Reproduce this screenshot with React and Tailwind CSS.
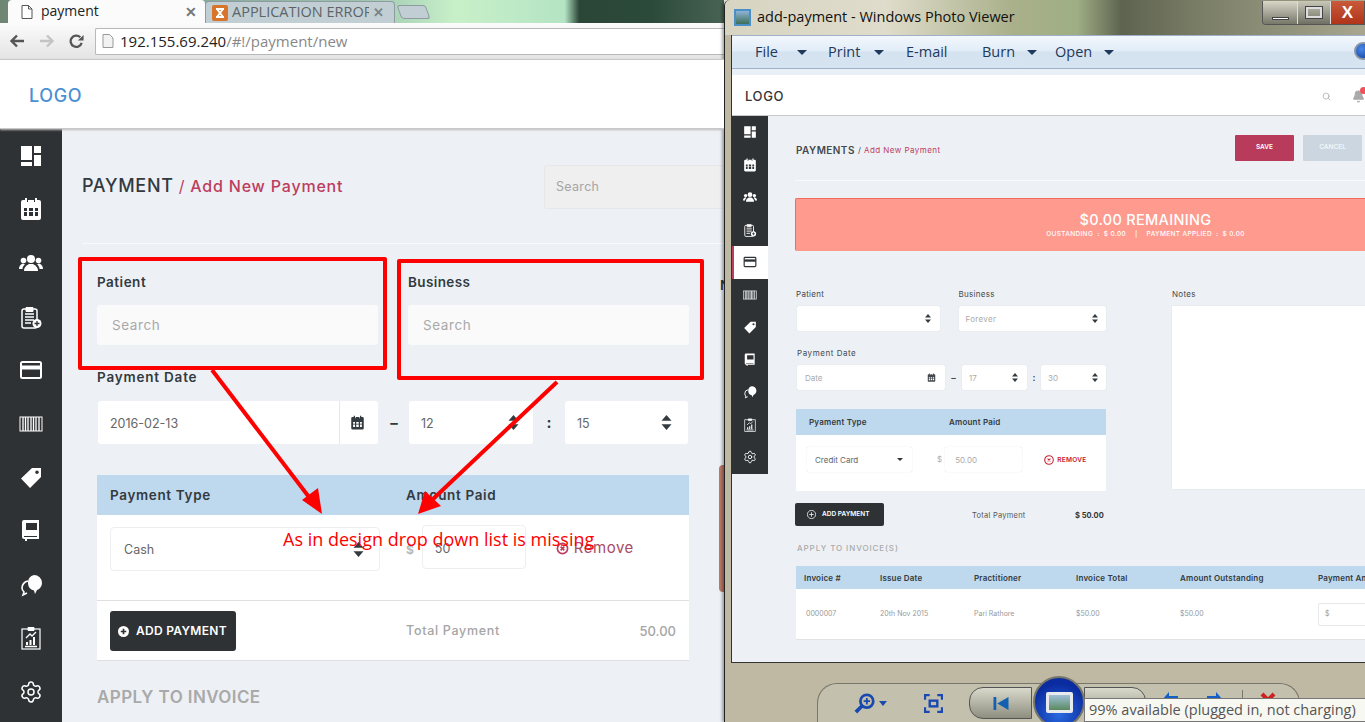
import { Settings, Search, Bell } from 'lucide-react';

const sans = "font-['Inter','Noto_Sans',sans-serif]";

// sidebar icons, all drawn on a 24 box so both sidebars can share them
const DashIcon = ({ className }) => (
  <svg viewBox="0 0 24 24" className={className} fill="currentColor">
    <path d="M2 2h11v14H2zM15 2h7v7h-7zM2 18h11v4H2zM15 11h7v11h-7z" />
  </svg>
);
const CalendarIcon = ({ className }) => (
  <svg viewBox="0 0 24 24" className={className} fill="currentColor">
    <path fillRule="evenodd" d="M4 3h2V1h2v4h1V3h6V1h0v4h1V1h2v2h2a2 2 0 0 1 2 2v16a2 2 0 0 1-2 2H4a2 2 0 0 1-2-2V5a2 2 0 0 1 2-2zM5 11v3h3v-3zM10 11v3h4v-3zM16 11v3h3v-3zM5 15v4h3v-4zM10 15v4h4v-4zM16 15v4h3v-4z" />
  </svg>
);
const UsersIcon = ({ className }) => (
  <svg viewBox="0 0 24 24" className={className} fill="currentColor">
    <circle cx="12" cy="8" r="4" />
    <path d="M5 20c0-4 3-6 5-7h4c2 1 5 3 5 7z" />
    <circle cx="4.5" cy="9.5" r="2.8" />
    <circle cx="19.5" cy="9.5" r="2.8" />
    <path d="M0 18c0-3 1.500-4.500 4-5.500l2 1c-1.500 1-2.500 2.500-2.500 4.500zM24 18c0-3-1.500-4.500-4-5.500l-2 1c1.500 1 2.500 2.500 2.500 4.500z" />
  </svg>
);
const ClipboardIcon = ({ className }) => (
  <svg viewBox="0 0 24 24" className={className} fill="none" stroke="currentColor">
    <rect x="3" y="4" width="15" height="19" rx="2" strokeWidth="1.500" />
    <path d="M7 2.500h7v4H7z" fill="currentColor" />
    <path d="M6 9h9M6 12h9M6 15h9M6 18h6" strokeWidth="1.300" />
    <circle cx="18" cy="18.500" r="4.500" fill="currentColor" stroke="none" />
    <path d="M18 16v5M15.500 18.500h5" stroke="#2f3235" strokeWidth="1.300" />
  </svg>
);
const CardIcon = ({ className }) => (
  <svg viewBox="0 0 24 24" className={className} fill="none" stroke="currentColor">
    <rect x="2" y="4" width="20" height="16" rx="1.500" strokeWidth="2" />
    <path d="M2 9.500h20" strokeWidth="4" />
  </svg>
);
const BarcodeIcon = ({ className }) => (
  <svg viewBox="0 0 24 24" className={className} fill="none" stroke="currentColor">
    <rect x="1" y="5" width="22" height="14" strokeWidth="1" />
    <path d="M4 5v14M6.500 5v14M9 5v14M12 5v14M14.500 5v14M17 5v14M20 5v14" strokeWidth="1.300" />
  </svg>
);
const TagIcon = ({ className }) => (
  <svg viewBox="0 0 24 24" className={className} fill="currentColor">
    <path fillRule="evenodd" d="M13 3h9v9L11 23 2 13.500zM18 5.500a1.800 1.800 0 1 0 0 3.600 1.800 1.800 0 0 0 0-3.600z" />
  </svg>
);
const BookIcon = ({ className }) => (
  <svg viewBox="0 0 24 24" className={className} fill="currentColor">
    <path fillRule="evenodd" d="M5 1h15v19H8v2H6v-2H5a2 2 0 0 1-2-2V3a2 2 0 0 1 2-2zM7 4v7h11V4zM5 17v1h13v-1z" />
  </svg>
);
const ChatIcon = ({ className }) => (
  <svg viewBox="0 0 24 24" className={className}>
    <path d="M9 8a7 7 0 0 0-6 7c0 2 1 3 2 4l-1 3 4-2" fill="none" stroke="currentColor" strokeWidth="1.600" />
    <path d="M15 2a8 8 0 0 1 8 8c0 3-2 6-5 7l-2 4-1-3.500A8 8 0 0 1 15 2z" fill="currentColor" />
  </svg>
);
const ReportIcon = ({ className }) => (
  <svg viewBox="0 0 24 24" className={className} fill="none" stroke="currentColor">
    <rect x="3" y="3" width="18" height="20" strokeWidth="1.200" />
    <path d="M9 1.500h6v3H9z" fill="currentColor" />
    <path d="M7 12l4-4 2 2 4-4" strokeWidth="1.300" />
    <path d="M8 19v-3M11.500 19v-5M15 19v-8" strokeWidth="2" />
    <path d="M6 20.500h12" strokeWidth="1.500" />
  </svg>
);
const GearIcon = ({ className }) => <Settings className={className} strokeWidth={1.5} />;

const navIcons = [DashIcon, CalendarIcon, UsersIcon, ClipboardIcon, CardIcon, BarcodeIcon, TagIcon, BookIcon, ChatIcon, ReportIcon, GearIcon];

const Updown = ({ className }) => (
  <svg viewBox="0 0 12 18" className={className} fill="currentColor">
    <path d="M6 0l6 7H0zM6 18l-6-7h12z" />
  </svg>
);

const RedBox = ({ className }) => (
  <div className={`absolute rounded-[2px] border-4 border-[#fe0000] ${className}`} />
);

function ChromeBar() {
  return (
    <div className="shrink-0">
      <div className="flex h-[23px] items-end bg-[linear-gradient(90deg,#6f8673_0%,#87a99a_28%,#9cc5b0_50%,#c8f0c8_63%,#b4e4c4_78%,#2a4637_80%,#2c4a3a_90%,#486354_100%)]">
        <div className="ml-[8px] flex h-[23px] w-[197px] items-center gap-[8px] rounded-t-[4px] bg-[#fbfbfb] pl-[13px] pr-[8px]">
          <svg viewBox="0 0 12 14" className="h-[14px] w-[12px] shrink-0" fill="#fff" stroke="#555">
            <path d="M1 .5h6.500L11 4v9.500H1z" />
            <path d="M7.500.5V4H11" fill="none" />
          </svg>
          <span className="flex-1 pb-[1px] font-['Open_Sans',sans-serif] text-[14px] leading-none text-[#222]">payment</span>
          <span className="font-['Liberation_Sans',sans-serif] text-[14px] font-bold leading-none text-[#777]">✕</span>
        </div>
        <div className="flex h-[22px] w-[190px] items-center gap-[4px] rounded-t-[4px] border border-b-0 border-[#8f9ba0] bg-[#c1cfd4] pl-[6px] pr-[10px]">
          <svg viewBox="0 0 16 16" className="h-[16px] w-[16px] shrink-0">
            <rect width="16" height="16" rx="2" fill="#d9752b" />
            <path d="M4 4h8M4 12h8M5 4l6 8M11 4l-6 8" stroke="#fff" strokeWidth="2" fill="none" />
          </svg>
          <span className="flex-1 overflow-hidden whitespace-nowrap font-['Open_Sans',sans-serif] text-[14.500px] leading-none text-[#5c6468]">APPLICATION ERROR</span>
          <span className="font-['Liberation_Sans',sans-serif] text-[13px] font-bold leading-none text-[#7b8488]">✕</span>
        </div>
        <div className="mb-[4px] ml-[4px] h-[14px] w-[29px] skew-x-[20deg] rounded-[3px] border border-[#8f9ba0] bg-[#c1cfd4]" />
      </div>
      <div className="flex h-[36px] items-center bg-[linear-gradient(#fbfbfb,#e4e4e4)] pl-[9px]">
        <div className="flex w-[86px] items-center gap-[14px]">
          <svg viewBox="0 0 16 14" className="h-[14px] w-[16px]" fill="none" stroke="#555" strokeWidth="2.400">
            <path d="M15 7H3M8 1.500L2.500 7 8 12.500" />
          </svg>
          <svg viewBox="0 0 16 14" className="h-[14px] w-[16px]" fill="none" stroke="#c4c4c4" strokeWidth="2.400">
            <path d="M1 7h12M8 1.500L13.500 7 8 12.500" />
          </svg>
          <svg viewBox="0 0 16 16" className="h-[15px] w-[15px]" fill="none" stroke="#555" strokeWidth="2.400">
            <path d="M13.500 9.500A6 6 0 1 1 12 3.500" />
            <path d="M15.500 1v6h-6z" fill="#555" stroke="none" />
          </svg>
        </div>
        <div className="flex h-[27px] flex-1 items-center gap-[6px] rounded-l-[2px] border border-r-0 border-[#b9b9b9] bg-white pl-[6px]">
          <svg viewBox="0 0 12 14" className="h-[14px] w-[12px]" fill="#f2f2f2" stroke="#999">
            <path d="M1 .5h6.500L11 4v9.500H1z" />
          </svg>
          <span className="font-['Open_Sans',sans-serif] text-[15px] leading-none text-[#222]">
            192.155.69.240<span className="text-[#888]">/#!/payment/new</span>
          </span>
        </div>
      </div>
    </div>
  );
}

function LeftPage() {
  return (
    <div className={`flex h-[722px] w-[724px] shrink-0 flex-col overflow-hidden ${sans}`}>
      <ChromeBar />
      <div className="z-10 flex h-[70px] shrink-0 items-center border-y border-[#c8c8c8] bg-white pl-[29px] pt-[3px] shadow-[0_1px_2px_#bbb]">
        <span className="text-[18px] font-medium leading-none tracking-[0.6px] text-[#4a90d2]">LOGO</span>
      </div>
      <div className="flex flex-1">
        <div className="flex w-[62px] shrink-0 flex-col bg-[#2f3235]">
          {navIcons.map((Icon, i) => (
            <div key={i} className="flex h-[53.600px] items-center justify-center text-white">
              <Icon className="h-[24px] w-[24px]" />
            </div>
          ))}
        </div>
        <div className="relative flex-1 overflow-hidden bg-[#edf1f5]">
          <div className="ml-[20px] flex h-[115px] items-center justify-between border-b border-[#f9fafb]">
            <div className="flex items-baseline gap-[5px] whitespace-nowrap">
              <span className="text-[18px] font-medium leading-none tracking-[0.7px] text-[#333a40]">PAYMENT</span>
              <span className="text-[16px] font-medium leading-none tracking-[0.8px] text-[#bd3d5e]">
                <span className="font-normal">/</span> Add New Payment
              </span>
            </div>
            <div className="mt-[1px] flex h-[44px] w-[180px] items-center rounded-l-[3px] border border-r-0 border-[#e6e7e8] bg-[#efefef] pl-[11px] pt-[2px] text-[12.500px] tracking-[0.3px] text-[#a5a5a5]">
              Search
            </div>
          </div>

          <div className="mx-[35px]">
            <div className="mt-[29px] grid grid-cols-[281px_281px] gap-x-[30px]">
              <div>
                <div className="text-[13.500px] font-semibold leading-[18px] tracking-[0.5px] text-[#333a40]">Patient</div>
                <div className="mt-[14px] flex h-[40px] items-center rounded-[3px] bg-[#fafafa] pl-[15px] text-[13.500px] tracking-[0.6px] text-[#a9a9a9]">Search</div>
              </div>
              <div>
                <div className="text-[13.500px] font-semibold leading-[18px] tracking-[0.4px] text-[#333a40]">Business</div>
                <div className="mt-[14px] flex h-[40px] items-center rounded-[3px] bg-[#fafafa] pl-[15px] text-[13.500px] tracking-[0.6px] text-[#a9a9a9]">Search</div>
              </div>
            </div>

            <div className="mt-[23px] text-[13.500px] font-semibold leading-[18px] tracking-[0.8px] text-[#333a40]">Payment Date</div>
            <div className="mt-[15px] flex items-center">
              <div className="ml-[1px] flex h-[43px] w-[280px] items-center rounded-[3px] bg-white">
                <span className="flex-1 pl-[12px] pt-[3px] text-[12.500px] text-[#666]">2016-02-13</span>
                <span className="flex h-full w-[39px] items-center justify-center border-l border-[#e8e8e8] pr-[3px]">
                  <CalendarIcon className="h-[15px] w-[15px] text-[#333a40]" />
                </span>
              </div>
              <span className="flex w-[31px] justify-center pl-[1px] text-[15px] font-bold leading-none text-[#333a40]">–</span>
              <div className="flex h-[43px] w-[124px] items-center justify-between rounded-[3px] bg-white pl-[12px] pr-[14px] text-[12.500px] text-[#666]">
                <span className="pt-[3px]">12</span> <Updown className="h-[15px] w-[11px] text-[#333a40]" />
              </div>
              <span className="flex w-[32px] justify-center text-[15px] font-bold leading-none text-[#333a40]">:</span>
              <div className="flex h-[43px] w-[123px] items-center justify-between rounded-[3px] bg-white pl-[12px] pr-[16px] text-[12.500px] text-[#666]">
                <span className="pt-[3px]">15</span> <Updown className="h-[15px] w-[11px] text-[#333a40]" />
              </div>
            </div>

            <div className="mt-[31px] w-[592px]">
              <div className="flex h-[40px] items-center bg-[#bed8ee] pl-[13px] text-[13.500px] font-semibold tracking-[0.65px] text-[#333a40]">
                <span className="w-[296px]">Payment Type</span>
                <span>Amount Paid</span>
              </div>
              <div className="flex h-[86px] items-start border-b border-[#dfdfdf] bg-white pl-[13px] pt-[10px]">
                <div className="mt-[2px] flex h-[44px] w-[270px] items-center justify-between rounded-[4px] border border-[#eeeeee] pl-[13px] pr-[15px] text-[12.500px] text-[#666]">
                  <span className="pt-[3px]">Cash</span> <Updown className="h-[15px] w-[11px] text-[#333a40]" />
                </div>
                <span className="ml-[26px] mt-[16px] text-[12px] font-bold text-[#b9b9b9]">$</span>
                <div className="ml-[8px] flex h-[44px] w-[104px] items-center rounded-[4px] border border-[#eeeeee] pl-[12px] pt-[4px] text-[12.500px] text-[#666]">50</div>
                <div className="ml-[30px] mt-[12px] flex items-center gap-[5px] text-[15px] tracking-[0.5px] text-[#a94a66]">
                  <svg viewBox="0 0 14 14" className="h-[13px] w-[13px]" fill="none" stroke="#bd3d5e" strokeWidth="1.800">
                    <circle cx="7" cy="7" r="5.500" />
                    <path d="M5 5l4 4M9 5l-4 4" />
                  </svg>
                  Remove
                </div>
              </div>
              <div className="flex h-[60px] items-center border-b border-[#dfdfdf] bg-white pl-[13px] pr-[13px]">
                <div className="flex h-[40px] w-[126px] items-center gap-[7px] rounded-[3px] bg-[#2f3235] pl-[8px] pt-[1px] text-[12px] font-semibold tracking-[0.3px] text-white">
                  <svg viewBox="0 0 12 12" className="h-[11px] w-[11px]">
                    <circle cx="6" cy="6" r="6" fill="#fff" />
                    <path d="M6 3v6M3 6h6" stroke="#2f3235" strokeWidth="1.800" />
                  </svg>
                  ADD PAYMENT
                </div>
                <span className="ml-[170px] pt-[2px] text-[12.500px] font-medium tracking-[0.7px] text-[#a5a5a5]">Total Payment</span>
                <span className="ml-auto pt-[2px] text-[13px] font-medium text-[#a5a5a5]">50.00</span>
              </div>
            </div>

            <div className="mt-[28px] text-[17px] font-semibold leading-none tracking-[0.4px] text-[#a9a9a9]">APPLY TO INVOICE</div>
          </div>

          <div className="absolute right-0 top-[336px] h-[127px] w-[5px] rounded-l-[4px] bg-[#bb7a66]" />
          <span className="absolute left-[658px] top-[146px] text-[13.500px] font-semibold text-[#333a40]">N</span>
        </div>
      </div>
    </div>
  );
}

const miniInput = 'flex h-[25px] items-center justify-between rounded-[2px] bg-white text-[8px] shadow-[0_0_1px_#ccc]';

function PhotoViewer() {
  const columns = ['Invoice #', 'Issue Date', 'Practitioner', 'Invoice Total', 'Amount Outstanding', 'Payment Amount'];
  const widths = ['w-[76px]', 'w-[94px]', 'w-[102px]', 'w-[104px]', 'w-[138px]', 'w-[60px]'];
  const cells = ['0000007', '20th Nov 2015', 'Pari Rathore', '$50.00', '$50.00'];

  return (
    <div className="relative flex h-[722px] w-[641px] shrink-0 flex-col overflow-hidden rounded-tl-[6px] border-l border-[#222] bg-[#bfb8a2] shadow-[-2px_0_3px_#0005]">
      {/* title bar */}
      <div className="flex h-[35px] shrink-0 items-center gap-[6px] bg-[linear-gradient(90deg,#d8d4c2_0%,#e0dccb_25%,#a9b08a_45%,#9fae84_55%,#5e6350_62%,#7c7f68_75%,#a8a68f_100%)] pl-[9px]">
        <span className="flex h-[17px] w-[17px] items-center justify-center border-2 border-[#4a8fc7] bg-[linear-gradient(#8fb4d6,#3d6f5a)]" />
        <span className="font-['Open_Sans',sans-serif] text-[14.500px] leading-none text-[#111]">add-payment - Windows Photo Viewer</span>
        <div className="absolute right-0 top-[1px] flex h-[24px] w-[103px] overflow-hidden rounded-bl-[4px] border border-t-0 border-[#555]">
          <div className="flex w-[35px] items-end justify-center border-r border-[#ddd] bg-[linear-gradient(#d9d7c8,#77776a)] pb-[4px]">
            <span className="h-[3px] w-[17px] border border-[#444] bg-white" />
          </div>
          <div className="flex w-[33px] items-center justify-center border-r border-[#ddd] bg-[linear-gradient(#c8c7b8,#6f7064)]">
            <span className="h-[11px] w-[16px] border-2 border-[#ddd] outline-1 outline-[#444]" />
          </div>
          <div className="flex flex-1 items-center justify-center bg-[linear-gradient(#c95a3a,#b0341a)] font-['Liberation_Sans',sans-serif] text-[17px] font-bold leading-none text-white">X</div>
        </div>
      </div>

      <div className="ml-[6px] flex flex-1 flex-col border-b border-l border-[#333]">
        {/* menu */}
        <div className="relative flex h-[34px] shrink-0 items-center border-y border-[#9fb1ca] bg-[linear-gradient(#f2f7fc_0%,#e2edf8_45%,#d5e3f1_50%,#d6e3f1_100%)] pl-[23px] pt-[1px] font-['Open_Sans',sans-serif] text-[14.500px] leading-none text-[#1e395b]">
          <span className="w-[24px]">File</span>
          <span className="ml-[18px] h-0 w-0 border-x-[5px] border-t-[5px] border-x-transparent border-t-[#1e395b]" />
          <span className="ml-[21px] w-[32px]">Print</span>
          <span className="ml-[14px] h-0 w-0 border-x-[5px] border-t-[5px] border-x-transparent border-t-[#1e395b]" />
          <span className="ml-[22px] w-[44px]">E-mail</span>
          <span className="ml-[32px] w-[32px]">Burn</span>
          <span className="ml-[13px] h-0 w-0 border-x-[5px] border-t-[5px] border-x-transparent border-t-[#1e395b]" />
          <span className="ml-[18px] w-[36px]">Open</span>
          <span className="ml-[13px] h-0 w-0 border-x-[5px] border-t-[5px] border-x-transparent border-t-[#1e395b]" />
          <span className="absolute -right-[7px] top-[6px] h-[18px] w-[18px] rounded-full border-2 border-[#8a96a6] bg-[radial-gradient(circle_at_40%_35%,#4a8ae8,#123c9c)]" />
        </div>
        <div className="h-[6px] shrink-0 bg-[#e9eff7]" />

        {/* app header */}
        <div className={`flex h-[41px] shrink-0 items-center border-b border-[#c9c9c9] bg-white pl-[13px] pt-[2px] ${sans}`}>
          <span className="w-[41px] text-[13px] font-medium leading-none tracking-[0.6px] text-[#333]">LOGO</span>
          <Search className="ml-[538px] h-[11px] w-[11px] text-[#aaa]" strokeWidth={2} />
          <div className="relative ml-[21px]">
            <Bell className="h-[13px] w-[13px] text-[#aaa]" fill="#aaa" />
            <span className="absolute -right-[2px] -top-[3px] h-[7px] w-[7px] rounded-full bg-[#f0525a]" />
          </div>
        </div>

        <div className={`flex flex-1 bg-[#edf1f5] ${sans}`}>
          <div className="w-[36px] shrink-0">
            <div className="flex flex-col bg-[#2f3235]">
              {navIcons.map((Icon, i) => (
                <div
                  key={i}
                  className={`flex h-[32.500px] items-center justify-center ${i === 4 ? 'bg-white text-[#2f3235] shadow-[inset_2px_0_0_#bd3d5e]' : 'text-white'}`}
                >
                  <Icon className="h-[14px] w-[14px]" />
                </div>
              ))}
            </div>
          </div>

          <div className="flex-1 overflow-hidden pl-[27px]">
            <div className="flex h-[65px] items-center border-b border-[#f7f9fb] pr-[3px]">
              <span className="ml-[1px] mt-[3px] whitespace-nowrap text-[10px] font-semibold leading-none tracking-[0.45px] text-[#44494e]">PAYMENTS</span>
              <span className="ml-[3px] mt-[3px] whitespace-nowrap text-[8px] leading-none tracking-[0.45px] text-[#bd3d5e]"><span className="text-[#44494e]">/</span> Add New Payment</span>
              <span className="ml-auto flex h-[26px] w-[59px] shrink-0 items-center justify-center rounded-[1px] bg-[#b93b5b] text-[6.500px] font-semibold text-white">SAVE</span>
              <span className="ml-[9px] flex h-[26px] w-[59px] shrink-0 items-center justify-center rounded-[1px] bg-[#cbd6e0] text-[6.500px] font-semibold text-[#f2f5f8]">CANCEL</span>
            </div>

            <div className="mt-[17px] flex h-[53px] w-[700px] flex-col items-center justify-center rounded-l-[2px] border-l border-t border-[#f26b60] bg-[#fe9a8e] text-white">
              <div className="text-[14.500px] font-medium leading-[16px] tracking-[0.3px]">$0.00 REMAINING</div>
              <div className="mt-[1px] flex gap-[9px] whitespace-pre text-[6.500px] font-medium leading-[10px] tracking-[0.35px]">
                <span>OUSTANDING  :  $ 0.00</span>
                <span>|</span>
                <span>PAYMENT APPLIED  :  $ 0.00</span>
              </div>
            </div>

            <div className="mt-[37px] flex">
              <div className="w-[311px] shrink-0">
                <div className="flex gap-[19px] pl-[1px] text-[8px] leading-[12px] tracking-[0.3px] text-[#44494e]">
                  <div className="w-[144px]">
                    Patient
                    <div className={`${miniInput} ml-[1px] mt-[6px] pr-[9px]`}>
                      <span />
                      <Updown className="h-[9px] w-[6px] text-[#333a40]" />
                    </div>
                  </div>
                  <div className="w-[148px]">
                    Business
                    <div className={`${miniInput} mt-[6px] pl-[7px] pr-[8px] text-[#aaa]`}>
                      Forever <Updown className="h-[9px] w-[6px] text-[#333a40]" />
                    </div>
                  </div>
                </div>
                <div className="mt-[16px] pl-[2px] text-[8px] leading-[12px] tracking-[0.55px] text-[#44494e]">Payment Date</div>
                <div className="mt-[6px] flex items-center pl-[2px]">
                  <div className={`${miniInput} w-[148px] pl-[8px] pr-[9px] text-[#aaa]`}>
                    Date <CalendarIcon className="h-[9px] w-[9px] text-[#44494e]" />
                  </div>
                  <span className="flex w-[17px] justify-center text-[9px] font-bold leading-none text-[#44494e]">–</span>
                  <div className={`${miniInput} w-[65px] pl-[7px] pr-[9px] text-[#aaa]`}>
                    17 <Updown className="h-[9px] w-[6px] text-[#333a40]" />
                  </div>
                  <span className="flex w-[14px] justify-center text-[9px] font-bold leading-none text-[#44494e]">:</span>
                  <div className={`${miniInput} w-[65px] pl-[7px] pr-[8px] text-[#aaa]`}>
                    30 <Updown className="h-[9px] w-[6px] text-[#333a40]" />
                  </div>
                </div>
                <div className="ml-[1px] mt-[19px] w-[310px]">
                  <div className="flex h-[26px] items-center bg-[#bed8ee] pl-[13px] text-[8px] font-semibold tracking-[0.2px] text-[#333a40]">
                    <span className="w-[140px]">Pyament Type</span>
                    <span>Amount Paid</span>
                  </div>
                  <div className="flex h-[56px] items-start bg-white pl-[11px] pt-[12px]">
                    <div className={`${miniInput} w-[105px] pl-[8px] pr-[9px] text-[#666]`}>
                      Credit Card
                      <span className="h-0 w-0 border-x-[3.500px] border-t-[3.500px] border-x-transparent border-t-[#333]" />
                    </div>
                    <span className="ml-[25px] mt-[6px] text-[8px] leading-[12px] text-[#aaa]">$</span>
                    <div className={`${miniInput} ml-[3px] w-[77px] pl-[10px] text-[#aaa]`}>50.00</div>
                    <svg viewBox="0 0 14 14" className="ml-[22px] mt-[8px] h-[10px] w-[10px]" fill="none" stroke="#c8202f" strokeWidth="1.500">
                      <circle cx="7" cy="7" r="6" />
                      <path d="M5 5l4 4M9 5l-4 4" />
                    </svg>
                    <span className="ml-[3px] mt-[8px] text-[6.500px] font-semibold leading-[10px] tracking-[0.3px] text-[#c8202f]">REMOVE</span>
                  </div>
                </div>
              </div>
              <div className="ml-[66px] w-[250px] shrink-0 text-[8px] leading-[12px] tracking-[0.3px] text-[#44494e]">
                Notes
                <div className="mt-[6px] h-[183px] bg-white shadow-[0_0_1px_#ccc]" />
              </div>
            </div>

            <div className="mt-[12px] flex items-center">
              <div className="flex h-[23px] w-[89px] items-center gap-[6px] rounded-[2px] bg-[#2f3235] pl-[12px] text-[6.500px] font-semibold text-white">
                <svg viewBox="0 0 12 12" className="h-[9px] w-[9px]" fill="none" stroke="#fff">
                  <circle cx="6" cy="6" r="5.500" />
                  <path d="M6 3v6M3 6h6" />
                </svg>
                ADD PAYMENT
              </div>
              <span className="ml-[88px] w-[55px] whitespace-nowrap pt-[2px] text-[7.500px] tracking-[0.25px] text-[#555]">Total Payment</span>
              <span className="ml-[48px] pt-[2px] text-[7.500px] font-bold text-[#333]">$ 50.00</span>
            </div>

            <div className="ml-[2px] mt-[17px] text-[8px] font-medium leading-[10px] tracking-[0.9px] text-[#aaa]">APPLY TO INVOICE(S)</div>

            <div className="ml-[1px] mt-[13px] w-[600px]">
              <div className="flex h-[23px] items-center whitespace-nowrap bg-[#bed8ee] pl-[8px] text-[8px] font-semibold tracking-[0.2px] text-[#333a40]">
                {columns.map((c, i) => (
                  <span key={c} className={widths[i]}>{c}</span>
                ))}
              </div>
              <div className="flex h-[51px] items-center whitespace-nowrap border-b border-[#e2e2e2] bg-white pl-[10px] text-[7px] text-[#999]">
                {cells.map((c, i) => (
                  <span key={i} className={i === 0 ? 'w-[74px]' : widths[i]}>{c}</span>
                ))}
                <span className="flex h-[23px] w-[60px] items-center rounded-[2px] border border-[#e8e8e8] pl-[6px]">$</span>
              </div>
            </div>
          </div>
        </div>
      </div>

      {/* photo viewer controls */}
      <div className="relative h-[59px] shrink-0">
        <div className="absolute bottom-0 left-[92px] flex h-[39px] w-[483px] items-center rounded-t-[20px] border border-b-0 border-[#77766a] bg-[#c4c0ae] pl-[36px]">
          <svg viewBox="0 0 24 24" className="h-[22px] w-[22px]" fill="none" stroke="#1848b0" strokeWidth="3">
            <circle cx="14" cy="10" r="7" />
            <path d="M9 15l-7 7" strokeWidth="4" />
            <path d="M14 6.500v7M10.500 10h7" strokeWidth="2" />
          </svg>
          <span className="ml-[3px] h-0 w-0 border-x-[4px] border-t-[5px] border-x-transparent border-t-[#1848b0]" />
          <svg viewBox="0 0 20 20" className="ml-[37px] h-[19px] w-[19px]" fill="none" stroke="#1848b0" strokeWidth="2.500">
            <path d="M1 6V1h5M14 1h5v5M19 14v5h-5M6 19H1v-5" />
            <rect x="6" y="7" width="8" height="6" />
          </svg>
          <div className="ml-[26px] flex h-[32px] w-[63px] items-center justify-center rounded-l-[14px] border border-[#555] bg-[linear-gradient(#d8d8cc,#8f8f80)]">
            <svg viewBox="0 0 18 16" className="h-[15px] w-[18px]" fill="#1460b0">
              <path d="M1 1h3v14H1zM17 1v14L5 8z" />
            </svg>
          </div>
          <div className="ml-[52px] h-[32px] w-[62px] rounded-r-[14px] border border-[#555] bg-[linear-gradient(#d8d8cc,#8f8f80)]" />
          <svg viewBox="0 0 18 18" className="-mt-[6px] ml-[15px] h-[18px] w-[18px]" fill="#1460c8">
            <path d="M8 1v4h9v8H8v4L1 9z" />
          </svg>
          <svg viewBox="0 0 18 18" className="-mt-[6px] ml-[27px] h-[18px] w-[18px]" fill="#1460c8">
            <path d="M10 1v4H1v8h9v4l7-8z" />
          </svg>
          <span className="-mt-[6px] ml-[18px] h-[20px] w-[1px] bg-[#77766a]" />
          <svg viewBox="0 0 16 16" className="-mt-[6px] ml-[17px] h-[16px] w-[16px]" stroke="#d02020" strokeWidth="4">
            <path d="M2 2l12 12M14 2L2 14" />
          </svg>
        </div>
        <div className="absolute -bottom-[6px] left-[308px] flex h-[52px] w-[52px] items-center justify-center rounded-full border-2 border-[#77766a] bg-[radial-gradient(circle_at_50%_75%,#2a6ae0,#0a2ca0_70%)]">
          <span className="h-[21px] w-[27px] rounded-[2px] border-[3px] border-[#e8eaee] bg-[linear-gradient(#9fc0d8,#5a8a60)]" />
        </div>
        <div className="absolute bottom-0 left-[359px] flex h-[24px] w-[282px] items-center whitespace-nowrap border border-[#777] bg-[#f8f8f2] pl-[4px] font-['Open_Sans',sans-serif] text-[14.500px] leading-none text-[#555]">
          99% available (plugged in, not charging)
        </div>
      </div>
    </div>
  );
}

export default function App() {
  return (
    <div className="relative flex h-[722px] w-[1365px] overflow-hidden bg-white">
      <LeftPage />
      <PhotoViewer />

      {/* red notes drawn on top of the screenshot */}
      <RedBox className="left-[78px] top-[257px] h-[113px] w-[309px]" />
      <RedBox className="left-[397px] top-[259px] h-[121px] w-[307px]" />
      <svg viewBox="0 0 1365 722" className="pointer-events-none absolute left-0 top-0 h-[722px] w-[1365px]">
        <path d="M212 370L312 501" stroke="#fe0000" strokeWidth="4" />
        <path d="M322 514L302 500 318 488z" fill="#fe0000" />
        <path d="M557 382L432 500" stroke="#fe0000" strokeWidth="4" />
        <path d="M418 514L425 491 441 506z" fill="#fe0000" />
      </svg>
      <span className="absolute left-[283px] top-[527px] whitespace-nowrap font-['Open_Sans',sans-serif] text-[18px] leading-[24px] text-[#fe0000]">
        As in design drop down list is missing
      </span>
    </div>
  );
}
